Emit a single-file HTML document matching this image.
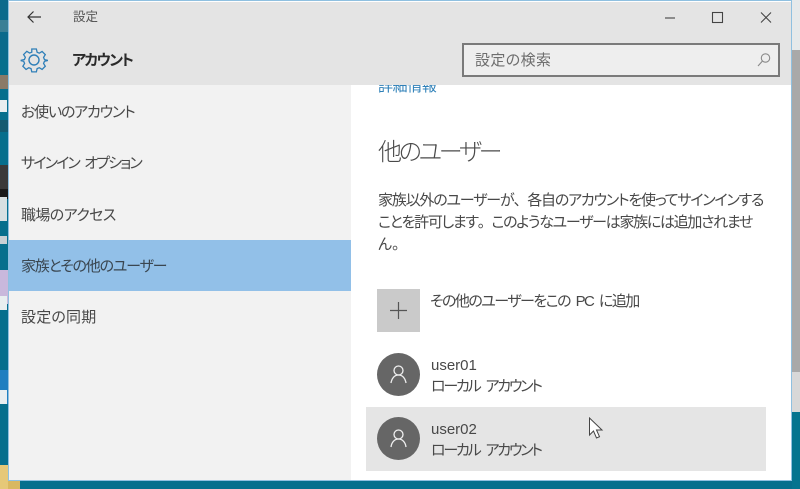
<!DOCTYPE html>
<html lang="ja"><head><meta charset="utf-8"><title>設定</title>
<style>
html,body{margin:0;padding:0;background:#0a6f8c}
#r{position:relative;width:800px;height:489px;overflow:hidden;background:#066f8d;font-family:"Liberation Sans","Noto Sans CJK JP",sans-serif;color:#444;font-feature-settings:"palt" 1}
#r div,#r svg{position:absolute}
.t{white-space:nowrap;line-height:20px}
.n{font-size:15px;color:#484848;left:21px}
.b{font-size:15px;color:#484848}
.f{font-feature-settings:normal}
</style></head><body><div id="r">
<!-- desktop left -->
<div style="left:0;top:0;width:8px;height:60px;background:#0b6a8c"></div>
<div style="left:0;top:20px;width:8px;height:12px;background:#3a7f96"></div>
<div style="left:0;top:75px;width:8px;height:14px;background:#8a7a68"></div>
<div style="left:0;top:100px;width:7px;height:12px;background:#e8eef0"></div>
<div style="left:0;top:120px;width:8px;height:12px;background:#145a70"></div>
<div style="left:0;top:165px;width:8px;height:24px;background:#3a3a3a"></div>
<div style="left:0;top:189px;width:8px;height:10px;background:#1a1a1a"></div>
<div style="left:0;top:197px;width:7px;height:24px;background:#d8e0e2"></div>
<div style="left:0;top:236px;width:7px;height:8px;background:#c8d0d4"></div>
<div style="left:0;top:270px;width:8px;height:34px;background:#c9b8dc"></div>
<div style="left:0;top:296px;width:7px;height:14px;background:#e8eef0"></div>
<div style="left:0;top:370px;width:8px;height:34px;background:#1f7fc0"></div>
<div style="left:0;top:390px;width:7px;height:14px;background:#e8eef0"></div>
<div style="left:0;top:465px;width:8px;height:24px;background:#e6c878"></div>
<div style="left:8px;top:481px;width:12px;height:8px;background:#d9b860"></div>
<!-- desktop right -->
<div style="left:792px;top:0;width:8px;height:50px;background:#e6e9ea"></div>
<div style="left:792px;top:50px;width:8px;height:322px;background:#a9a9a9"></div>
<div style="left:792px;top:372px;width:8px;height:40px;background:#d8d8d8"></div>
<div style="left:792px;top:412px;width:8px;height:77px;background:#05748f"></div>
<!-- window -->
<div style="left:8px;top:0;width:784px;height:481px;background:#fff;border:0;box-shadow:inset 0 0 0 1px #8fc0e0"></div>
<div style="left:9px;top:2px;width:782px;height:83px;background:#e4e4e4"></div>
<div style="left:9px;top:85px;width:342px;height:395px;background:#f2f2f2"></div>
<div style="left:352px;top:85px;width:439px;height:395px;background:#fff"></div>
<!-- title bar -->
<svg style="left:26px;top:9px" width="18" height="16" viewBox="0 0 18 16" fill="none" stroke="#333" stroke-width="1.2"><path d="M2 8H15M7.500 2.500L2 8l5.500 5.500"/></svg>
<div class="t" style="left:73px;top:7px;font-size:12.500px;color:#555">設定</div>
<svg style="left:665px;top:10px" width="110" height="16" viewBox="0 0 110 16" fill="none" stroke="#444" stroke-width="1.100"><path d="M0 8H10"/><rect x="47.500" y="2.500" width="10" height="10"/><path d="M96 2.500l10 10M106 2.500l-10 10"/></svg>
<!-- gear -->
<svg style="left:20px;top:46px" width="28" height="28" viewBox="0 0 28 28" fill="none" stroke="#2f7fb8" stroke-width="1.400"><path d="M11.500 2h5l.8 3.500 2.400 1 3-1.900 3.500 3.500-1.900 3 1 2.400 3.500.8v.2l-3.500.8-1 2.400 1.900 3-3.500 3.500-3-1.900-2.400 1-.8 3.500h-5l-.8-3.500-2.400-1-3 1.900-3.500-3.500 1.900-3-1-2.400L0 14.700v-.5l3.500-.8 1-2.400-1.900-3 3.500-3.500 3 1.900 2.400-1z" transform="translate(1.200 1.200) scale(.92)"/><circle cx="14" cy="14" r="5"/></svg>
<div class="t" style="left:72px;top:51px;font-size:15px;font-weight:bold;color:#2a2a2a;letter-spacing:-1.600px">アカウント</div>
<!-- search -->
<div style="left:462px;top:43px;width:314px;height:30px;background:#eeeeee;border:2px solid #7a7a7a"></div>
<div class="t" style="left:475px;top:51px;font-size:15px;color:#6e6e6e;letter-spacing:.4px">設定の検索</div>
<svg style="left:756px;top:52px" width="16" height="16" viewBox="0 0 16 16" fill="none" stroke="#8a8a8a" stroke-width="1.100"><circle cx="9.500" cy="6" r="4.200"/><path d="M6.500 9L2 14"/></svg>
<!-- nav -->
<div class="t n" style="top:103px;letter-spacing:-1.200px">お使いのアカウント</div>
<div class="t n" style="top:154px;letter-spacing:-1.850px;word-spacing:3px">サインイン オプション</div>
<div class="t n" style="top:206px;letter-spacing:-.6px">職場のアクセス</div>
<div style="left:9px;top:240px;width:342px;height:51px;background:#92c0e8"></div>
<div class="t n" style="top:257px;color:#3a4650;letter-spacing:-1.200px">家族とその他のユーザー</div>
<div class="t n" style="top:308px;letter-spacing:.2px">設定の同期</div>
<!-- content -->
<div style="left:352px;top:85px;width:439px;height:10px;overflow:hidden"><div class="t" style="left:26px;top:-8px;font-size:15px;color:#2f80b8;letter-spacing:-.4px">詳細情報</div></div>
<div class="t" style="left:378px;top:139px;font-size:24px;line-height:28px;color:#4a4a4a;font-weight:300;letter-spacing:-3.200px">他のユーザー</div>
<div class="t b" style="left:378px;top:191px;letter-spacing:-1.200px">家族以外のユーザーが<span class="f">、</span>各自のアカウントを使ってサインインする</div>
<div class="t b" style="left:378px;top:213px;letter-spacing:-1.300px">ことを許可します<span class="f">。</span>このようなユーザーは家族には追加されませ</div>
<div class="t b" style="left:378px;top:235px">ん。</div>
<!-- add -->
<div style="left:377px;top:289px;width:43px;height:43px;background:#cacaca"></div>
<svg style="left:389px;top:301px" width="19" height="19" viewBox="0 0 19 19" stroke="#555" stroke-width="1.200"><path d="M9.500 1v17M1 9.500h17"/></svg>
<div class="t b" style="left:430px;top:292px;letter-spacing:-1.550px;word-spacing:3px">その他のユーザーをこの PC に追加</div>
<!-- user01 -->
<div style="left:377px;top:353px;width:43px;height:43px;border-radius:50%;background:#666"></div>
<svg style="left:389px;top:364px" width="19" height="21" viewBox="0 0 19 21" fill="none" stroke="#f0f0f0" stroke-width="1.300"><circle cx="9.500" cy="6.500" r="4.500"/><path d="M2 19c.5-4.500 3.500-8 7.500-8s7 3.500 7.500 8"/></svg>
<div class="t b" style="left:431px;top:356px">user01</div>
<div class="t b" style="left:431px;top:377px;letter-spacing:-2.200px;word-spacing:4px">ローカル アカウント</div>
<!-- user02 -->
<div style="left:366px;top:407px;width:400px;height:64px;background:#e5e5e5"></div>
<div style="left:377px;top:417px;width:43px;height:43px;border-radius:50%;background:#666"></div>
<svg style="left:389px;top:428px" width="19" height="21" viewBox="0 0 19 21" fill="none" stroke="#f0f0f0" stroke-width="1.300"><circle cx="9.500" cy="6.500" r="4.500"/><path d="M2 19c.5-4.500 3.500-8 7.500-8s7 3.500 7.500 8"/></svg>
<div class="t b" style="left:431px;top:420px">user02</div>
<div class="t b" style="left:431px;top:441px;letter-spacing:-2.200px;word-spacing:4px">ローカル アカウント</div>
<!-- cursor -->
<svg style="left:588px;top:417px" width="16" height="23" viewBox="0 0 16 23" fill="#fff" stroke="#444" stroke-width="1"><path d="M1.500 1v17l4-4 3 7 3-1.300-3-6.700h5.500z"/></svg>
</div></body></html>
